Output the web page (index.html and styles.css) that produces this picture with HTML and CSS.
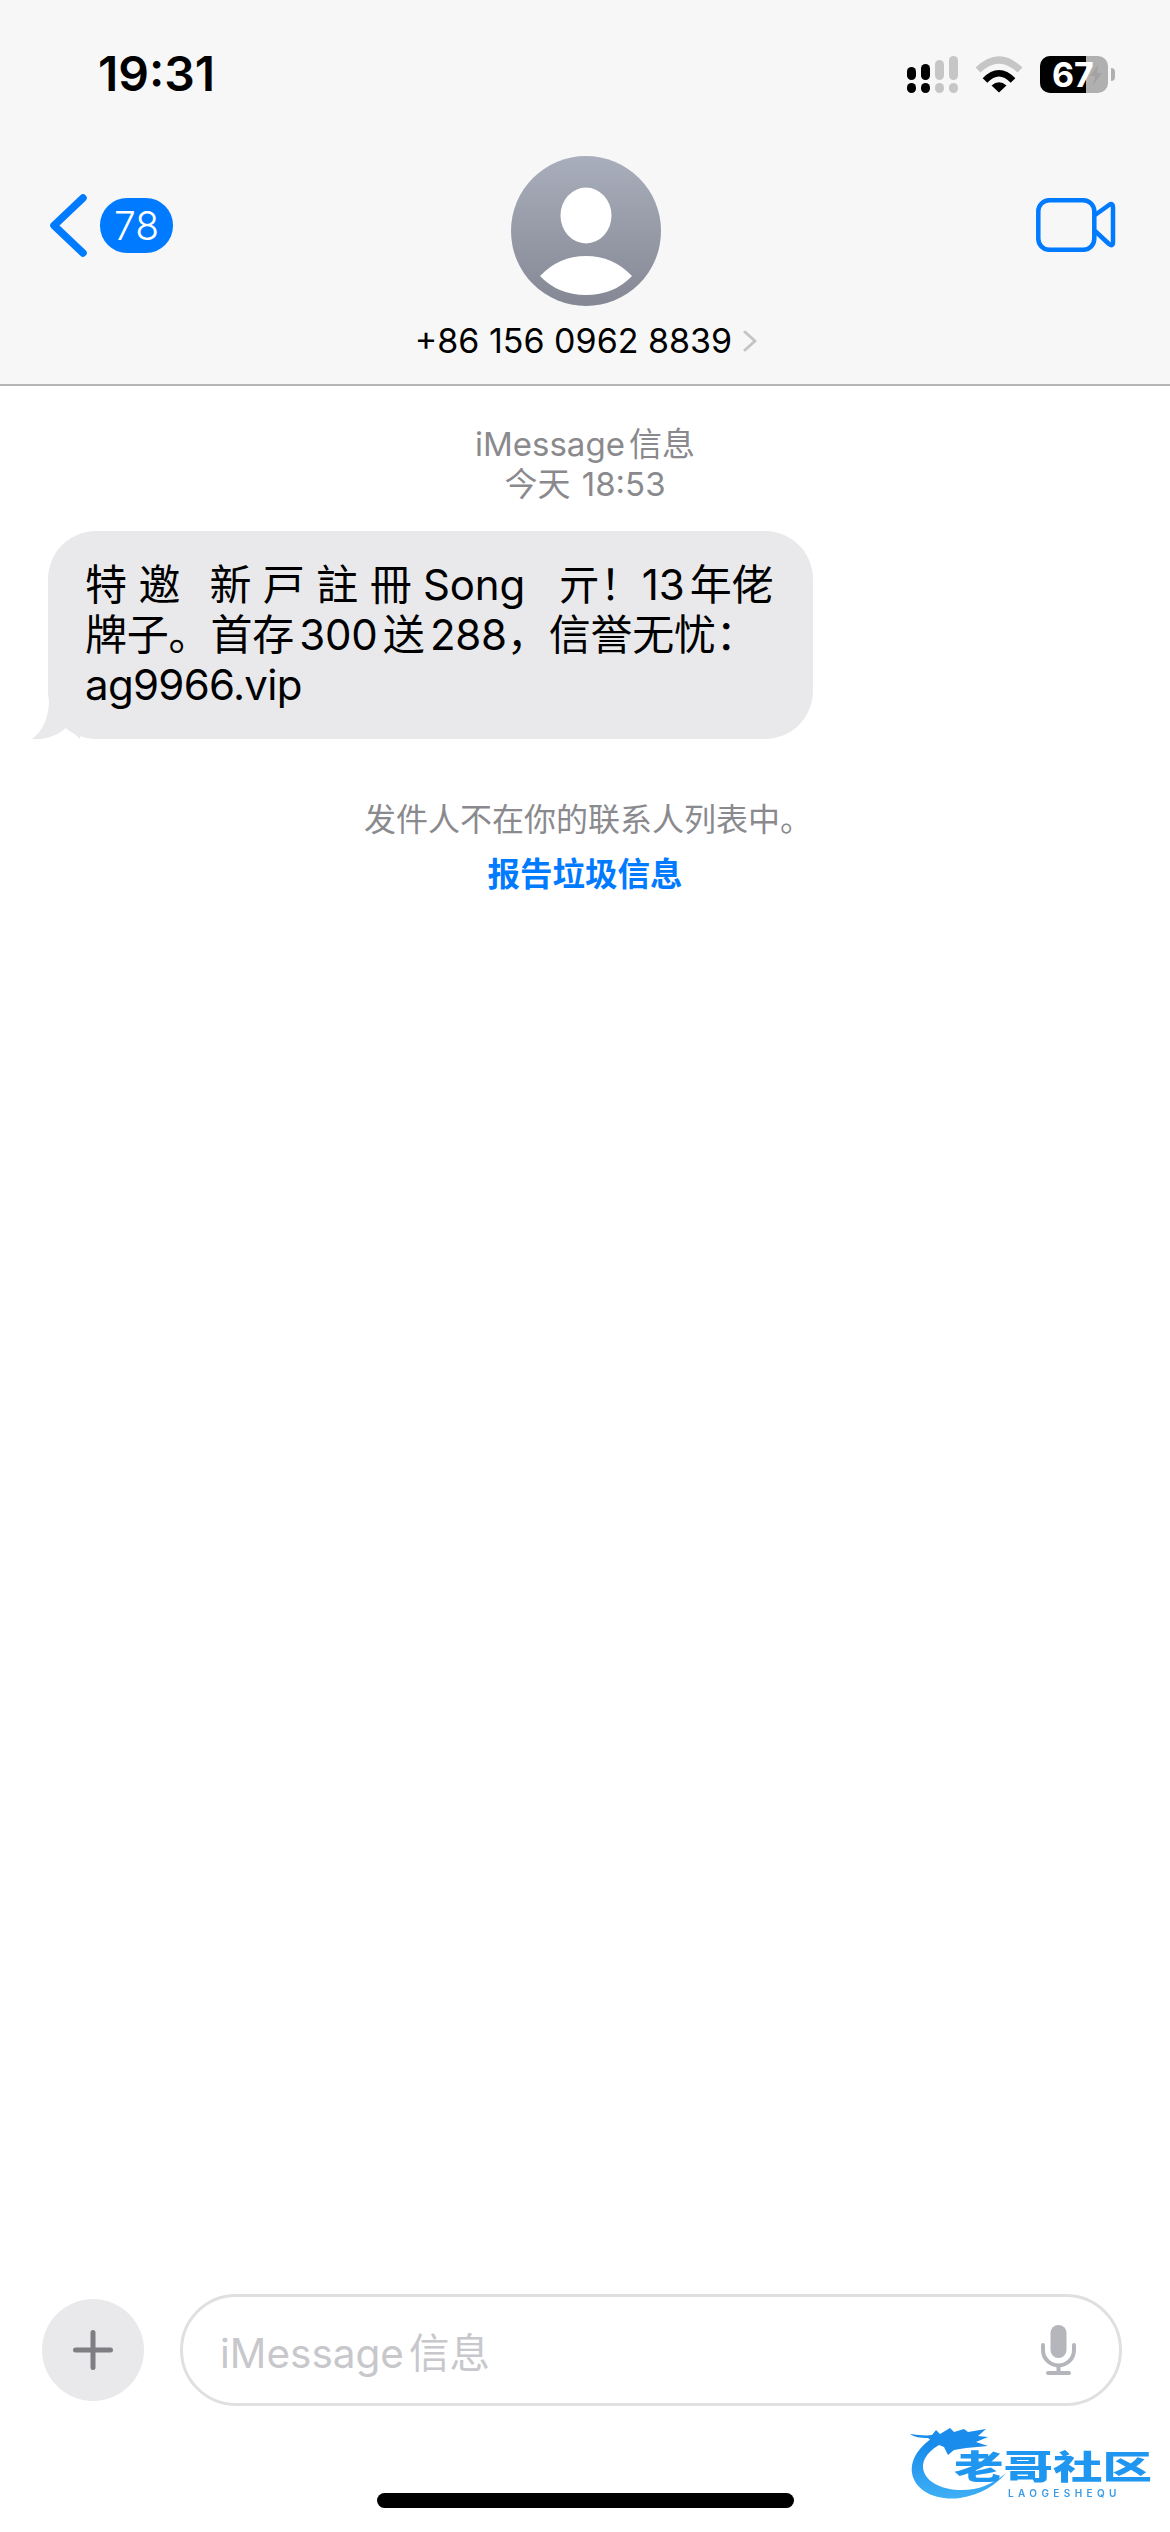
FILE: index.html
```html
<!DOCTYPE html>
<html lang="zh">
<head>
<meta charset="utf-8">
<title>iMessage</title>
<link rel="stylesheet" href="styles.css">
</head>
<body>
<div class="phone">
  <header class="top">
    <div class="status">
      <span class="time">19:31</span>
      <div class="status-icons">
        <svg class="signal" width="51" height="37" viewBox="0 0 51 37">
          <g fill="#000">
            <rect x="0" y="11" width="9" height="13" rx="4.5"/><rect x="0" y="27" width="9" height="10" rx="4.5"/>
            <rect x="14" y="8" width="9" height="16" rx="4.5"/><rect x="14" y="27" width="9" height="10" rx="4.5"/>
          </g>
          <g fill="#c6c6c6">
            <rect x="28" y="4" width="9" height="20" rx="4.5"/><rect x="28" y="27" width="9" height="10" rx="4.5"/>
            <rect x="42" y="0" width="9" height="24" rx="4.5"/><rect x="42" y="27" width="9" height="10" rx="4.5"/>
          </g>
        </svg>
        <svg class="wifi" width="48" height="38" viewBox="0 0 48 38">
          <path d="M3 15 Q24 -5 45 15" fill="none" stroke="#c6c6c6" stroke-width="7"/>
          <path d="M10 25.500 Q24 11 38 25.500" fill="none" stroke="#000" stroke-width="6.500"/>
          <path d="M16.500 30.500 Q24 24 31.500 30.500 L24 37.500Z" fill="#000"/>
        </svg>
        <div class="battery">
          <div class="battery-case">
            <div class="battery-fill"></div>
            <svg class="bolt" width="12" height="20" viewBox="0 0 12 20"><path d="M8 0 L0 11 H5 L3 20 L12 8 H7Z" fill="#a2a2a2"/></svg>
            <span class="battery-num">67</span>
          </div>
          <div class="battery-nub"></div>
        </div>
      </div>
    </div>
    <div class="nav">
      <div class="back">
        <svg width="37" height="63" viewBox="0 0 37 63"><path d="M33 4 L4 31.500 L33 59" fill="none" stroke="#007aff" stroke-width="7.500" stroke-linecap="round" stroke-linejoin="round"/></svg>
        <span class="badge">78</span>
      </div>
      <div class="contact">
        <svg class="avatar" width="150" height="150" viewBox="0 0 150 150">
          <defs><linearGradient id="av" x1="0" y1="0" x2="0" y2="1"><stop offset="0" stop-color="#a9aebc"/><stop offset="1" stop-color="#858894"/></linearGradient></defs>
          <circle cx="75" cy="75" r="75" fill="url(#av)"/>
          <ellipse cx="75" cy="59.500" rx="25.500" ry="28" fill="#fff"/>
          <path d="M29 120 Q48 100 75 100 Q102 100 121 120 Q103 139 75 139 Q47 139 29 120Z" fill="#fff"/>
        </svg>
        <div class="number">
          <span>+86 156 0962 8839</span>
          <svg width="14" height="22" viewBox="0 0 14 22"><path d="M2 2 L12 11 L2 20" fill="none" stroke="#c5c5c7" stroke-width="3" stroke-linecap="round" stroke-linejoin="round"/></svg>
        </div>
      </div>
      <svg class="video" width="80" height="54" viewBox="0 0 80 54">
        <rect x="2.300" y="2.300" width="56" height="49.500" rx="11" fill="none" stroke="#007aff" stroke-width="4.500"/>
        <path d="M59 17 L73 7 Q77 4.500 77 9 V44 Q77 49 73 46 L59 33" fill="none" stroke="#007aff" stroke-width="4.500" stroke-linejoin="round"/>
      </svg>
    </div>
  </header>

  <main class="thread">
    <div class="stamp">
      <div>iMessage信息</div>
      <div>今天 18:53</div>
    </div>
    <div class="bubble">
      <svg class="tail" width="52" height="40" viewBox="0 0 52 40"><path d="M19 0 C19 18 12 32 2 39 C14 40 28 36 37 27 L50 39 L50 0Z" fill="#e9e9eb"/></svg>
      <p class="bubble-text">特 邀  <span class="gap-a"></span>新 戸 註 冊 Song  <span class="gap-b"></span>亓！13年佬<br>牌子。首存300送288，信誉无忧：<br><span class="url">ag9966.vip</span></p>
    </div>
    <p class="notice">发件人不在你的联系人列表中。</p>
    <p class="report">报告垃圾信息</p>
  </main>

  <footer class="composer">
    <div class="plus">
      <svg width="40" height="40" viewBox="0 0 40 40"><path d="M20 2.500 V37.500 M2.500 20 H37.500" stroke="#7e7e83" stroke-width="5" stroke-linecap="round"/></svg>
    </div>
    <div class="input">
      <span class="placeholder">iMessage信息</span>
      <svg class="mic" width="35" height="50" viewBox="0 0 35 50">
        <rect x="9.500" y="0" width="16" height="33" rx="8" fill="#b4b6bb"/>
        <path d="M2 20 V25 A15.500 15.500 0 0 0 33 25 V20" fill="none" stroke="#b4b6bb" stroke-width="4" stroke-linecap="round"/>
        <path d="M17.500 41 V47 M7 48 H28" stroke="#b4b6bb" stroke-width="4" stroke-linecap="round"/>
      </svg>
    </div>
  </footer>
  <div class="home"></div>

  <div class="watermark">
    <svg class="dragon" width="82" height="80" viewBox="0 0 82 80">
      <defs><linearGradient id="dr" x1="0" y1="0" x2="0" y2="1"><stop offset="0" stop-color="#1186ea"/><stop offset="1" stop-color="#3fb0f5"/></linearGradient></defs>
      <path d="M24 14 C8 24 0 38 2 50 C5 68 26 78 50 75 C70 72 86 62 96 50 C82 62 66 68 48 67 C28 66 12 56 13 42 C14 32 24 24 36 18Z" fill="url(#dr)"/>
      <path d="M0 11 C8 12 16 13 22 12 L26 7 L30 11 L40 5 L44 9 L54 6 L58 9 L76 6 L68 13 L78 14 L66 19 L78 23 L56 25 L44 27 L38 32 L34 24 L24 20 L18 15 C10 15 4 14 0 11Z" fill="#1a8cec"/>
    </svg>
    <span class="wm-title">老哥社区</span>
    <span class="wm-sub">LAOGESHEQU</span>
  </div>
</div>
</body>
</html>
```
FILE: styles.css
```css
* { box-sizing: border-box; }
html, body { margin: 0; padding: 0; background: #fff; }
body { font-family: Inter, "Noto Sans CJK SC", sans-serif; color: #000; text-autospace: normal; }
p { margin: 0; }
svg { display: block; flex: none; }

.phone {
  position: relative;
  width: 1170px;
  height: 2532px;
  display: flex;
  flex-direction: column;
  overflow: hidden;
}

.top {
  height: 386px;
  background: #f7f7f7;
  border-bottom: 2px solid #b4b4b4;
}
.status {
  height: 148px;
  padding: 0 55px 0 98px;
  display: flex;
  align-items: center;
  justify-content: space-between;
}
.time { font-size: 48px; font-weight: 600; line-height: 1; }
.status-icons { display: flex; align-items: center; }
.signal { margin-right: 17px; }
.wifi { margin-right: 17px; }
.battery { display: flex; align-items: center; gap: 3px; }
.battery-case {
  position: relative;
  width: 68px;
  height: 37px;
  border-radius: 10px;
  background: #b0b0b0;
}
.battery-fill { position: absolute; left: 0; top: 0; bottom: 0; width: 46px; background: #000; border-radius: 10px 0 0 10px; }
.bolt { position: absolute; left: 50px; top: 9px; }
.battery-num {
  position: absolute;
  left: 12px;
  top: 0;
  font-size: 34px;
  line-height: 37px;
  font-weight: 700;
  color: #fff;
}
.battery-nub { width: 4px; height: 13px; background: #b0b0b0; border-radius: 0 6px 6px 0; }

.nav {
  margin-top: 8px;
  padding: 0 50px 0 52px;
  display: grid;
  grid-template-columns: 1fr auto 1fr;
  align-items: start;
}
.back { margin: 38px 0 0 -2px; display: flex; align-items: center; gap: 13px; }
.badge {
  width: 73px;
  height: 55px;
  border-radius: 27px;
  background: #007aff;
  color: #fff;
  font-size: 39px;
  font-weight: 300;
  line-height: 55px;
  text-align: center;
}
.contact { display: flex; flex-direction: column; align-items: center; }
.number {
  margin-top: 13px;
  display: flex;
  align-items: center;
  gap: 11px;
  font-size: 34px;
  line-height: 44px;
  white-space: nowrap;
}
.video { justify-self: end; margin: 42px 4px 0 0; }

.thread { flex: 1; display: flex; flex-direction: column; }
.stamp {
  margin-top: 38px;
  text-align: center;
  font-size: 33px;
  line-height: 40px;
  color: #8a8a8e;
  word-spacing: 2px;
}
.bubble {
  position: relative;
  margin: 27px 0 0 48px;
  width: 765px;
  height: 208px;
  padding: 29px 20px 29px 37px;
  background: #e9e9eb;
  border-radius: 48px;
}
.tail { position: absolute; left: -18px; bottom: -1px; }
.bubble-text {
  position: relative;
  font-size: 42px;
  line-height: 50px;
  white-space: pre;
  letter-spacing: -0.2px;
}
.gap-a { display: inline-block; width: 6px; }
.gap-b { display: inline-block; width: 10px; }
.url { letter-spacing: -0.7px; }
.notice {
  margin-top: 61px;
  text-align: center;
  font-size: 32px;
  line-height: 40px;
  color: #8a8a8e;
  padding-left: 6px;
}
.report {
  margin-top: 15px;
  text-align: center;
  font-size: 32.500px;
  line-height: 40px;
  font-weight: 600;
  color: #007aff;
}

.composer {
  padding: 0 48px 0 42px;
  display: flex;
  align-items: center;
  gap: 36px;
}
.plus {
  width: 102px;
  height: 102px;
  border-radius: 50%;
  background: #e9e9eb;
  display: flex;
  align-items: center;
  justify-content: center;
}
.input {
  flex: 1;
  height: 112px;
  padding: 0 43px 0 37px;
  border: 3px solid #e0e0e0;
  border-radius: 56px;
  display: flex;
  align-items: center;
  justify-content: space-between;
}
.placeholder { font-size: 40.500px; color: #c7c7cc; }

.home {
  margin: 87px auto 24px;
  width: 417px;
  height: 15px;
  border-radius: 8px;
  background: #000;
}

.watermark {
  position: absolute;
  left: 910px;
  top: 2423px;
  width: 240px;
  height: 80px;
  filter: blur(0.7px);
}
.dragon { position: absolute; left: 0; top: 0; overflow: visible; }
.wm-title {
  position: absolute;
  left: 44px;
  top: 26px;
  width: 132px;
  font-size: 33px;
  line-height: 36px;
  font-weight: 900;
  white-space: nowrap;
  transform-origin: left top;
  transform: scale(1.5, 1);
  color: #1f96f0;
}
.wm-sub {
  position: absolute;
  left: 98px;
  top: 64px;
  font-size: 10px;
  line-height: 12px;
  letter-spacing: 4.400px;
  font-weight: 600;
  color: #3a9be6;
  white-space: nowrap;
}
```
